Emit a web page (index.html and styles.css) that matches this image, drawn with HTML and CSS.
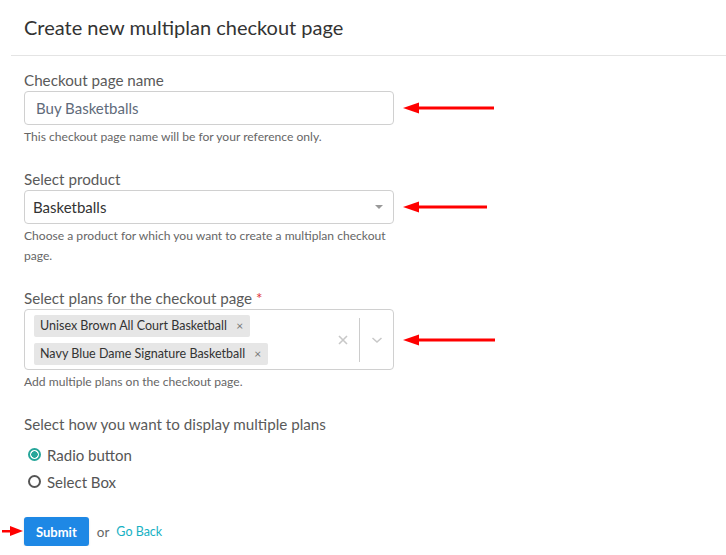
FILE: index.html
```html
<!DOCTYPE html>
<html lang="en">
<head>
    <meta charset="UTF-8">
    <title>Create new multiplan checkout page</title>
    <link rel="stylesheet" href="styles.css">
</head>
<body>
    <div class="page-header">
        <h1 class="page-title">Create new multiplan checkout page</h1>
    </div>
    <form class="checkout-form">
        <div class="form-group">
            <label class="field-label">Checkout page name</label>
            <div class="field-row">
                <input class="text-input" type="text" value="Buy Basketballs">
                <svg class="pointer" width="100" height="12" viewBox="0 0 100 12"><polygon points="2,6 18,0.5 18,11.5" fill="#f00"/><rect x="16" y="4.5" width="77" height="3" fill="#f00"/></svg>
            </div>
            <div class="help-text">This checkout page name will be for your reference only.</div>
        </div>

        <div class="form-group">
            <label class="field-label">Select product</label>
            <div class="field-row">
                <div class="select-box">
                    <span>Basketballs</span>
                    <span class="caret"></span>
                </div>
                <svg class="pointer" width="100" height="12" viewBox="0 0 100 12"><polygon points="2,6 18,0.5 18,11.5" fill="#f00"/><rect x="16" y="4.5" width="70" height="3" fill="#f00"/></svg>
            </div>
            <div class="help-text">Choose a product for which you want to create a multiplan checkout page.</div>
        </div>

        <div class="form-group">
            <label class="field-label">Select plans for the checkout page <span class="required">*</span></label>
            <div class="field-row">
                <div class="multi-select">
                    <div class="tags">
                        <span class="tag">Unisex Brown All Court Basketball <span class="tag-x">&times;</span></span>
                        <span class="tag">Navy Blue Dame Signature Basketball <span class="tag-x">&times;</span></span>
                    </div>
                    <div class="multi-controls">
                        <svg class="clear-icon" width="12" height="12" viewBox="0 0 12 12"><path d="M2 2L10 10M10 2L2 10" stroke="#c8c8c8" stroke-width="1.6"/></svg>
                        <span class="divider"></span>
                        <svg class="chevron" width="12" height="8" viewBox="0 0 12 8"><path d="M1.5 2L6 6L10.5 2" stroke="#c8c8c8" stroke-width="1.5" fill="none"/></svg>
                    </div>
                </div>
                <svg class="pointer" width="100" height="12" viewBox="0 0 100 12"><polygon points="2,6 18,0.5 18,11.5" fill="#f00"/><rect x="16" y="4.5" width="78" height="3" fill="#f00"/></svg>
            </div>
            <div class="help-text">Add multiple plans on the checkout page.</div>
        </div>

        <div class="form-group">
            <div class="field-label">Select how you want to display multiple plans</div>
            <div class="radio-list">
                <label class="radio-option"><span class="radio checked"></span>Radio button</label>
                <label class="radio-option"><span class="radio"></span>Select Box</label>
            </div>
        </div>

        <div class="form-actions">
            <svg class="submit-pointer" width="22" height="12" viewBox="0 0 22 12"><polygon points="21,6 8,1 8,11" fill="#f00"/><rect x="0" y="5" width="10" height="2.5" fill="#f00"/></svg>
            <button class="submit-button" type="button">Submit</button>
            <span class="or-text">or</span>
            <a class="back-link" href="#">Go Back</a>
        </div>
    </form>
</body>
</html>
```

FILE: styles.css
```css
body {
    margin: 0;
    background: #fff;
    font-family: Lato, "Open Sans", sans-serif;
    color: #555;
}
.page-header {
    height: 55px;
    margin-left: 11px;
    padding-left: 13px;
    border-bottom: 1px solid #e4e4e4;
}
.page-title {
    margin: 0;
    line-height: 55px;
    font-size: 20px;
    font-weight: normal;
    color: #333;
}
.checkout-form {
    padding: 14px 24px 0;
}
.form-group {
    margin-bottom: 22px;
}
.field-label {
    display: block;
    font-size: 15.2px;
    line-height: 20px;
    color: #5a5a5a;
    margin-bottom: 1px;
}
.required {
    color: #e0333a;
}
.field-row {
    display: flex;
    align-items: center;
}
.text-input,
.select-box,
.multi-select {
    box-sizing: border-box;
    width: 370px;
    border: 1px solid #d0d0d0;
    border-radius: 4px;
    background: #fff;
}
.text-input {
    height: 34px;
    padding: 0 11px;
    font-family: inherit;
    font-size: 15px;
    color: #5f6b7a;
    outline: none;
}
.select-box {
    height: 34px;
    padding: 0 8px;
    display: flex;
    align-items: center;
    justify-content: space-between;
    font-size: 15px;
    color: #333;
}
.caret {
    width: 0;
    height: 0;
    border-left: 4px solid transparent;
    border-right: 4px solid transparent;
    border-top: 4px solid #999;
    margin-right: 2px;
}
.pointer {
    margin-left: 7px;
}
.help-text {
    margin-top: 2px;
    font-size: 12.1px;
    line-height: 20px;
    color: #666;
    width: 370px;
}
.multi-select {
    height: 61px;
    padding: 4px 0 4px 9px;
    display: flex;
    align-items: center;
    justify-content: space-between;
}
.tags {
    display: flex;
    flex-direction: column;
    align-items: flex-start;
    gap: 6px;
}
.tag {
    height: 22px;
    line-height: 22px;
    padding: 0 7px 0 6px;
    background: #e6e6e6;
    border-radius: 2px;
    font-size: 12.5px;
    color: #333;
}
.tag-x {
    margin-left: 6px;
    font-size: 12px;
    color: #777;
}
.multi-controls {
    display: flex;
    align-items: center;
    height: 100%;
}
.clear-icon {
    margin-right: 10px;
}
.divider {
    width: 1px;
    height: 44px;
    background: #ccc;
}
.chevron {
    margin: 0 10px 0 11px;
}
.radio-list {
    margin-top: 7px;
}
.radio-option {
    display: flex;
    align-items: center;
    height: 27px;
    padding-left: 4px;
    font-size: 15px;
    color: #555;
}
.radio {
    box-sizing: border-box;
    width: 13px;
    height: 13px;
    border: 2px solid #555;
    border-radius: 50%;
    margin-right: 6px;
}
.radio.checked {
    border-color: #26a69a;
    background: radial-gradient(circle, #26a69a 0 3px, #fff 3.5px);
}
.form-actions {
    position: relative;
    display: flex;
    align-items: center;
    margin-top: 21px;
}
.submit-pointer {
    position: absolute;
    left: -22px;
    top: 8px;
}
.submit-button {
    height: 29px;
    padding: 0 12px;
    border: none;
    border-radius: 3px;
    background: #1e88e5;
    color: #fff;
    font-family: inherit;
    font-size: 13px;
    font-weight: bold;
    box-shadow: 0 1px 2px rgba(0, 0, 0, 0.15);
}
.or-text {
    margin-left: 8px;
    font-size: 13.5px;
    color: #666;
}
.back-link {
    margin-left: 7px;
    font-size: 12.5px;
    color: #17b1c3;
    text-decoration: none;
}
```
